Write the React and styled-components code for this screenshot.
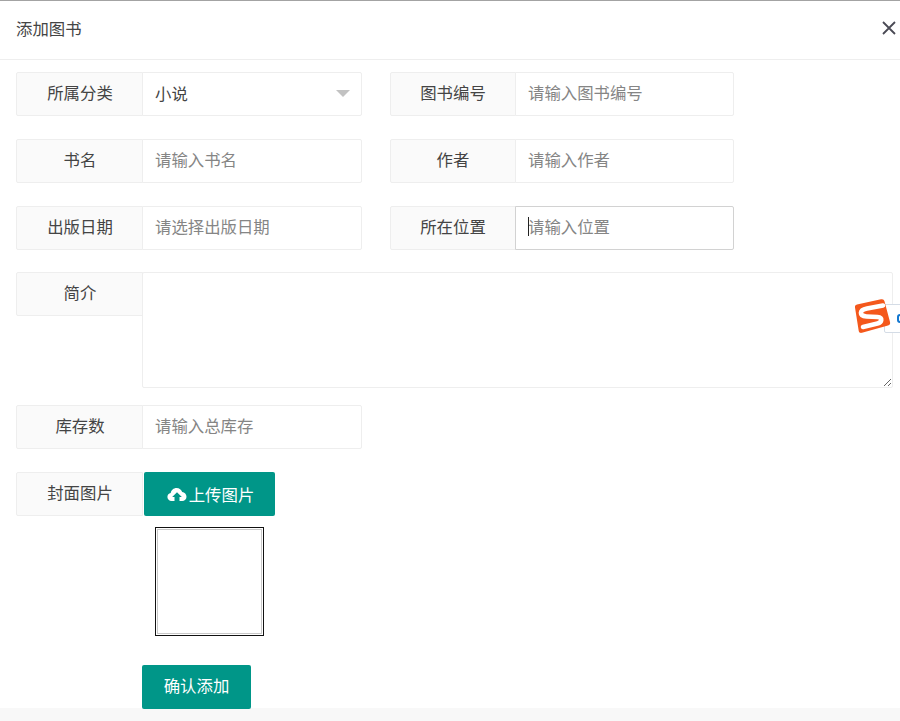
import React from "react";
import styled, { createGlobalStyle } from "styled-components";

const FONT = `"Noto Sans CJK SC", "Liberation Sans", sans-serif`;

const Global = createGlobalStyle`
  html, body { margin: 0; padding: 0; background: #fff; }
  body { font-family: ${FONT}; color: #444; overflow: hidden; }
  *, *::before, *::after { box-sizing: border-box; }
`;
const Dialog = styled.div`
  position: relative; width: 900px; height: 721px; border-top: 1px solid #a3a3a3; overflow: hidden; background: #fff;
`;
const Header = styled.header`
  height: 59px; border-bottom: 1px solid #eee; padding: 0 0 5px 16px;
  display: flex; align-items: center; justify-content: space-between;
  font-size: 16.4px; color: #444;
`;
const Close = styled.button`
  width: 22px; height: 22px; margin-top: 1px; padding: 0; border: 0; background: none; display: flex; align-items: center; justify-content: center;
`;
const Form = styled.form`
  position: relative; z-index: 1; padding: 12px 7px 0 16px; display: flex; flex-direction: column;
`;
const Row = styled.div`
  display: flex; gap: 28px; margin-bottom: ${p => p.$mb ?? 23}px;
`;
const Item = styled.div`
  display: flex; align-items: flex-start; width: ${p => p.$w || 346}px;
`;
const Label = styled.label`
  flex: none; width: ${p => (p.$second ? 126 : 127)}px; height: 44px; background: #fafafa; border: 1px solid #eee; border-radius: 2px 0 0 2px;
  padding: 0 0 4px ${p => (p.$second ? 0 : 1)}px;
  display: flex; align-items: center; justify-content: center; font-size: 16.4px; color: #444;
`;
const Input = styled.input`
  flex: 1; min-width: 0; height: 44px; margin-left: -1px; border: 1px solid ${p => p.$focus ? "#d2d2d2" : "#eee"};
  border-radius: 0 2px 2px 0; padding: 0 12px 4px; outline: 0; background: #fff;
  font: 16.4px ${FONT}; color: #444;
  &::placeholder { color: #858585; opacity: 1; }
`;
const Field = styled.div`
  position: relative; flex: 1; min-width: 0; display: flex;
`;
const Caret = styled.span`
  position: absolute; left: 12px; top: 11px; width: 1px; height: 19px; background: #222;
`;
const Select = styled.div`
  flex: 1; height: 44px; margin-left: -1px; border: 1px solid #eee; border-radius: 0 2px 2px 0; padding: 0 11px 2px 12px;
  display: flex; align-items: center; justify-content: space-between; font-size: 16.4px; color: #444; background: #fff;
`;
const Arrow = styled.i`
  width: 0; height: 0; border: 7px solid transparent; border-top: 7px solid #c2c2c2; border-bottom: 0;
`;
const Area = styled.textarea`
  flex: 1; height: 116px; margin-left: -1px; border: 1px solid #eee; border-radius: 2px; outline: 0; padding: 6px 10px;
  resize: vertical; background: #fff; font: 16px ${FONT};
`;
const UploadButton = styled.button`
  width: 131px; height: 44px; margin-left: 1px; background: #009688; color: #fff; border: 0; border-radius: 2px;
  display: flex; align-items: center; justify-content: center; gap: 2px; font: 16.4px ${FONT}; padding: 0 0 1px 2px;
`;
const PreviewWrap = styled.div`
  padding-left: 139px; margin-bottom: 29px;
`;
const Preview = styled.div`
  width: 109px; height: 109px; border: 1px solid #111; background: #fff; padding: 1px;
  &::after { content: ""; display: block; width: 100%; height: 100%; border: 1px solid #c8c8c8; }
`;
const SubmitWrap = styled.div`
  padding-left: 126px;
`;
const Submit = styled.button`
  width: 109px; height: 44px; background: #009688; color: #fff; border: 0; border-radius: 2px; padding: 0 0 4px;
  font: 16.4px ${FONT};
`;
const Footer = styled.div`
  position: absolute; left: 0; right: 0; bottom: 0; height: 13px; background: #f8f8f8;
`;
const ImeWidget = styled.div`
  position: absolute; z-index: 2; left: 854px; top: 297px;
`;
const ImeTab = styled.div`
  position: absolute; left: 30px; top: 6px; width: 30px; height: 29px; background: #fff; border: 1px solid #d4dce6; border-radius: 2px;
  &::after { content: ""; position: absolute; left: 12px; top: 9px; width: 8px; height: 9px; border: 2px solid #1277d0; border-radius: 3px; }
`;
const LogoMark = styled.svg`
  position: relative; z-index: 1; display: block;
`;

const Cloud = () => (
  <svg width="20" height="16" viewBox="0 0 20 16" aria-hidden="true">
    <path fill="#fff" d="M4.6 15C2.200 15 .4 13.300.4 11c0-2 1.400-3.600 3.300-3.900C4.100 4.200 6.500 2 9.600 2c2.700 0 4.900 1.700 5.600 4.100 2.400.1 4.300 2.200 4.300 4.600 0 2.400-1.900 4.300-4.300 4.300h-2.700v-4h2.300L10 6.200 5.200 11h2.300v4z" />
  </svg>
);
const Times = () => (
  <svg width="14" height="14" viewBox="0 0 14 14" aria-hidden="true">
    <path d="M1 1l12 12M13 1L1 13" stroke="#4a4a55" strokeWidth="1.800" fill="none" />
  </svg>
);
const SogouLogo = () => (
  <LogoMark width="38" height="38" viewBox="0 0 38 38" aria-hidden="true">
    <path fill="#f4581c" d="M3 6.500 27 1.300c2-.4 3 .3 3.500 2L36 24c.5 2-.2 3.100-2 3.600L8 34.800c-1.800.4-3-.3-3.300-2.100L1 9.500c-.3-1.500.5-2.700 2-3z" />
    <path fill="none" stroke="#fff" strokeWidth="4.600" strokeLinecap="round" d="M29 7.500 13 10.500C5 12 5 18 12.500 18.500l11 .5c5.500.5 4.500 5.500 0 6.500L9 29" />
  </LogoMark>
);

function Text({ label, placeholder, focus, second }) {
  return (
    <Item $w={second ? 344 : undefined}>
      <Label $second={second}>{label}</Label>
      <Field>
        <Input placeholder={placeholder} $focus={focus} />
        {focus && <Caret />}
      </Field>
    </Item>
  );
}

export default function App() {
  return (
    <Dialog>
      <Global />
      <Header>
        添加图书
        <Close aria-label="关闭"><Times /></Close>
      </Header>
      <Form>
        <Row>
          <Item>
            <Label>所属分类</Label>
            <Select>小说<Arrow /></Select>
          </Item>
          <Text second label="图书编号" placeholder="请输入图书编号" />
        </Row>
        <Row>
          <Text label="书名" placeholder="请输入书名" />
          <Text second label="作者" placeholder="请输入作者" />
        </Row>
        <Row $mb={22}>
          <Text label="出版日期" placeholder="请选择出版日期" />
          <Text second label="所在位置" placeholder="请输入位置" focus />
        </Row>
        <Row $mb={17}>
          <Item $w={877}>
            <Label>简介</Label>
            <Area />
          </Item>
        </Row>
        <Row>
          <Text label="库存数" placeholder="请输入总库存" />
        </Row>
        <Row $mb={11}>
          <Item>
            <Label>封面图片</Label>
            <UploadButton type="button"><Cloud />上传图片</UploadButton>
          </Item>
        </Row>
        <PreviewWrap><Preview /></PreviewWrap>
        <SubmitWrap><Submit type="button">确认添加</Submit></SubmitWrap>
      </Form>
      <Footer />
      <ImeWidget><SogouLogo /><ImeTab /></ImeWidget>
    </Dialog>
  );
}
